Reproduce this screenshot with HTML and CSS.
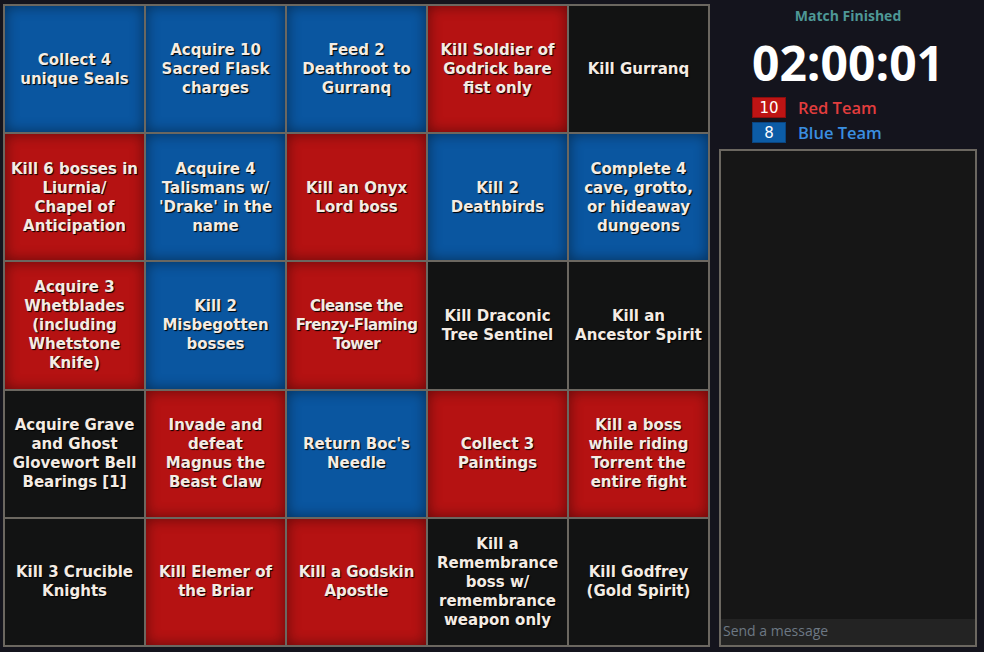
FILE: index.html
```html
<!DOCTYPE html>
<html>
<head>
<meta charset="utf-8">
<link rel="stylesheet" href="styles.css">
</head>
<body>
<div class="app">
  <div class="board">
    <div class="cell blue">Collect 4 unique Seals</div>
    <div class="cell blue">Acquire 10 Sacred Flask charges</div>
    <div class="cell blue">Feed 2 Deathroot to Gurranq</div>
    <div class="cell red">Kill Soldier of Godrick bare fist only</div>
    <div class="cell black">Kill Gurranq</div>

    <div class="cell red">Kill 6 bosses in Liurnia/ Chapel of Anticipation</div>
    <div class="cell blue">Acquire 4 Talismans w/ 'Drake' in the name</div>
    <div class="cell red">Kill an Onyx Lord boss</div>
    <div class="cell blue">Kill 2 Deathbirds</div>
    <div class="cell blue">Complete 4 cave, grotto, or hideaway dungeons</div>

    <div class="cell red">Acquire 3 Whetblades (including Whetstone Knife)</div>
    <div class="cell blue">Kill 2 Misbegotten bosses</div>
    <div class="cell red tight">Cleanse the<br>Frenzy&#8209;Flaming<br>Tower</div>
    <div class="cell black">Kill Draconic Tree Sentinel</div>
    <div class="cell black">Kill an Ancestor Spirit</div>

    <div class="cell black">Acquire Grave and Ghost Glovewort Bell Bearings [1]</div>
    <div class="cell red">Invade and<br>defeat<br>Magnus the<br>Beast Claw</div>
    <div class="cell blue">Return Boc's Needle</div>
    <div class="cell red">Collect 3 Paintings</div>
    <div class="cell red">Kill a boss while riding Torrent the entire fight</div>

    <div class="cell black">Kill 3 Crucible Knights</div>
    <div class="cell red">Kill Elemer of the Briar</div>
    <div class="cell red">Kill a Godskin Apostle</div>
    <div class="cell black">Kill a Remembrance boss w/ remembrance weapon only</div>
    <div class="cell black">Kill Godfrey (Gold Spirit)</div>
  </div>

  <div class="panel">
    <div class="status">Match Finished</div>
    <div class="scoreblock">
      <div class="timer">02:00:01</div>
      <div class="team">
        <span class="badge badge-red">10</span>
        <span class="team-name name-red">Red Team</span>
      </div>
      <div class="team">
        <span class="badge badge-blue">8</span>
        <span class="team-name name-blue">Blue Team</span>
      </div>
    </div>
    <div class="chat">
      <div class="messages"></div>
      <input class="chat-input" type="text" placeholder="Send a message">
    </div>
  </div>
</div>
</body>
</html>
```

FILE: styles.css
```css
html, body {
  margin: 0;
  padding: 0;
  background: #14141d;
  width: 984px;
  height: 652px;
  overflow: hidden;
}

.app {
  display: flex;
  height: 652px;
}

.board {
  margin: 4px 0 0 3px;
  width: 707px;
  height: 643px;
  box-sizing: border-box;
  padding: 2px;
  gap: 2px;
  background: #6b6760;
  display: grid;
  grid-template-columns: repeat(5, 1fr);
  grid-template-rows: repeat(5, 1fr);
}

.cell {
  display: flex;
  align-items: center;
  justify-content: center;
  text-align: center;
  padding: 1px 6px 0;
  font-family: "DejaVu Sans", sans-serif;
  font-weight: bold;
  font-size: 15px;
  line-height: 19px;
  color: #f4ece4;
  text-shadow: 1px 1px 1px #000;
  box-shadow: inset 0 0 14px rgba(0, 0, 0, 0.45);
}

.tight {
  letter-spacing: -0.6px;
  white-space: nowrap;
  padding: 1px 2px 0;
}

.blue { background: #0a56a0; }
.red { background: #b51212; }
.black { background: #121313; box-shadow: none; }

.panel {
  flex: 1;
  display: flex;
  flex-direction: column;
  padding: 0 7px 5px 9px;
  font-family: "Open Sans", sans-serif;
}

.status {
  text-align: center;
  color: #4e9896;
  font-weight: 700;
  font-size: 14px;
  margin-top: 6px;
  line-height: 19px;
}

.scoreblock {
  align-self: center;
  display: flex;
  flex-direction: column;
  gap: 4px;
}

.timer {
  color: #ffffff;
  font-weight: 700;
  font-size: 48px;
  line-height: 56px;
  margin-top: 10px;
  margin-bottom: 2px;
}

.team {
  display: flex;
  align-items: center;
  gap: 12px;
  height: 21px;
}

.badge {
  width: 34px;
  height: 21px;
  box-sizing: border-box;
  display: flex;
  align-items: center;
  justify-content: center;
  color: #fff;
  font-family: "DejaVu Sans", sans-serif;
  font-size: 15px;
}

.badge-red { background: #bd1414; border: 1px solid #8a0e0e; }
.badge-blue { background: #0c5ca6; border: 1px solid #0a4580; }

.team-name {
  font-size: 16.5px;
  font-weight: 600;
}

.name-red { color: #e23d3d; }
.name-blue { color: #3a8ee0; }

.chat {
  margin-top: 6px;
  flex: 1;
  display: flex;
  flex-direction: column;
  border: 2px solid #6b6760;
  background: #161616;
}

.messages {
  flex: 1;
}

.chat-input {
  height: 26px;
  box-sizing: border-box;
  border: none;
  outline: none;
  background: #232323;
  color: #ddd;
  padding: 0 2px 3px;
  font-family: "Open Sans", sans-serif;
  font-size: 14px;
}

.chat-input::placeholder {
  color: #6d7884;
}
```
